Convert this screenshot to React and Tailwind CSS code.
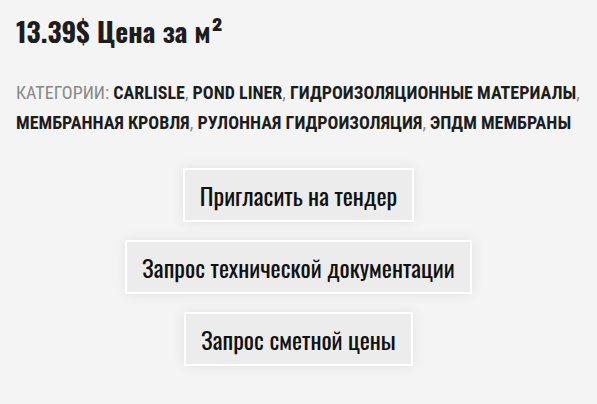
import React from "react";

const oswald = { fontFamily: '"Oswald", "DejaVu Sans Condensed", sans-serif' };
const robotoCond = { fontFamily: '"Roboto Condensed", "Roboto", sans-serif' };

const lines = [
  ["CARLISLE", "POND LINER", "ГИДРОИЗОЛЯЦИОННЫЕ МАТЕРИАЛЫ"],
  ["МЕМБРАННАЯ КРОВЛЯ", "РУЛОННАЯ ГИДРОИЗОЛЯЦИЯ", "ЭПДМ МЕМБРАНЫ"],
];

const buttons = [
  "Пригласить на тендер",
  "Запрос технической документации",
  "Запрос сметной цены",
];

export default function App() {
  return (
    <div className="min-h-screen w-full bg-[#f4f4f4] px-4 pt-[11px]">
      {/* Price */}
      <h2 className="text-[27.5px] font-bold leading-[40px] text-[#1d1d1d]" style={oswald}>
        13.39$ Цена за м²
      </h2>

      {/* Categories */}
      <div className="mt-[27px] text-[18px] leading-[30px] uppercase text-[#888]" style={robotoCond}>
        {lines.map((line, li) => (
          <div key={li} className="whitespace-nowrap">
            {li === 0 && <span>Категории: </span>}
            {line.map((c, i) => (
              <React.Fragment key={c}>
                <a href="#" className="font-bold text-[#1d1d1d]">{c}</a>
                {(li === 0 || i < line.length - 1) && <span>, </span>}
              </React.Fragment>
            ))}
          </div>
        ))}
      </div>

      {/* Actions */}
      <div className="mt-[30px] flex flex-col items-center gap-[18px]" style={oswald}>
        {buttons.map((b) => (
          <button
            key={b}
            className="h-[54px] border-2 border-white bg-[#ececec] px-[15px] text-[24px] text-[#111] shadow-[0_0_12px_rgba(0,0,0,0.08)]"
          >
            {b}
          </button>
        ))}
      </div>
    </div>
  );
}
